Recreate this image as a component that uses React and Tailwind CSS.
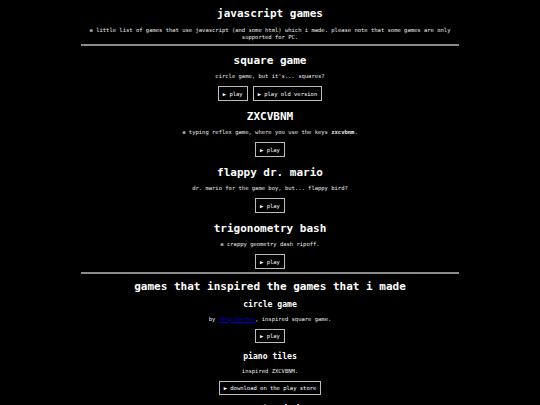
import React from "react";

const mono = { fontFamily: '"DejaVu Sans Mono", "Liberation Mono", monospace' };

function Btn({ children, tall }) {
  return (
    <span
      className={
        "inline-block border border-[#bdbdbd] px-[4px] leading-[6px] text-[5.5px] text-white " +
        (tall ? "py-[3.5px]" : "py-[3px]")
      }
    >
      ▶ {children}
    </span>
  );
}

function Game({ title, desc, buttons }) {
  return (
    <div className="flex flex-col items-center">
      <h1 className="mt-[8.5px] mb-[6px] text-[11px] leading-[13px] font-bold text-white">{title}</h1>
      <p className="mb-[6.5px] text-[5.5px] leading-[7px] text-[#ececec]">{desc}</p>
      <div className="flex gap-[5px]">
        {buttons.map((b) => (
          <Btn key={b} tall>
            {b}
          </Btn>
        ))}
      </div>
    </div>
  );
}

function Inspo({ title, desc, button, first }) {
  return (
    <div className="flex flex-col items-center">
      <h2
        className={
          "mb-[6.5px] text-[8.1px] leading-[10px] font-bold text-white " + (first ? "mt-[6.5px]" : "mt-[8px]")
        }
      >
        {title}
      </h2>
      <p className="mb-[6.5px] text-[5.5px] leading-[7px] text-[#ececec]">{desc}</p>
      <Btn>{button}</Btn>
    </div>
  );
}

export default function App() {
  return (
    <div className="w-[540px] h-[405px] overflow-hidden bg-black" style={mono}>
      <div className="mx-auto w-[378px] text-center">
        <h1 className="pt-[6.5px] text-[11px] leading-[13px] font-bold text-white">javascript games</h1>
        <p className="mt-[7px] text-[5.5px] leading-[7px] text-[#ececec]">
          a little list of games that use javascript (and some html) which i made. please note that some games are only supported for PC.
        </p>
        <div className="mt-[3.5px] h-[2px] bg-[#8a8a8a]" />
        <div className="-mt-[1px]">
          <Game title="square game" desc="circle game, but it's... squares?" buttons={["play", "play old version"]} />
          <Game
            title="ZXCVBNM"
            desc={
              <>
                a typing reflex game, where you use the keys <b>zxcvbnm</b>.
              </>
            }
            buttons={["play"]}
          />
          <Game title="flappy dr. mario" desc="dr. mario for the game boy, but... flappy bird?" buttons={["play"]} />
          <Game title="trigonometry bash" desc="a crappy geometry dash ripoff." buttons={["play"]} />
        </div>
        <div className="mt-[3px] h-[2px] bg-[#8a8a8a]" />
        <h1 className="mt-[5.5px] text-[11px] leading-[13px] font-bold text-white">games that inspired the games that i made</h1>
        <Inspo
          first
          title="circle game"
          desc={
            <>
              by <span className="text-[#0000cc] underline">Shep Barton</span>, inspired square game.
            </>
          }
          button="play"
        />
        <Inspo title="piano tiles" desc="inspired ZXCVBNM." button="download on the play store" />
        <Inspo title="geometry dash" desc="inspired trigonometry bash." button="play" />
      </div>
    </div>
  );
}
